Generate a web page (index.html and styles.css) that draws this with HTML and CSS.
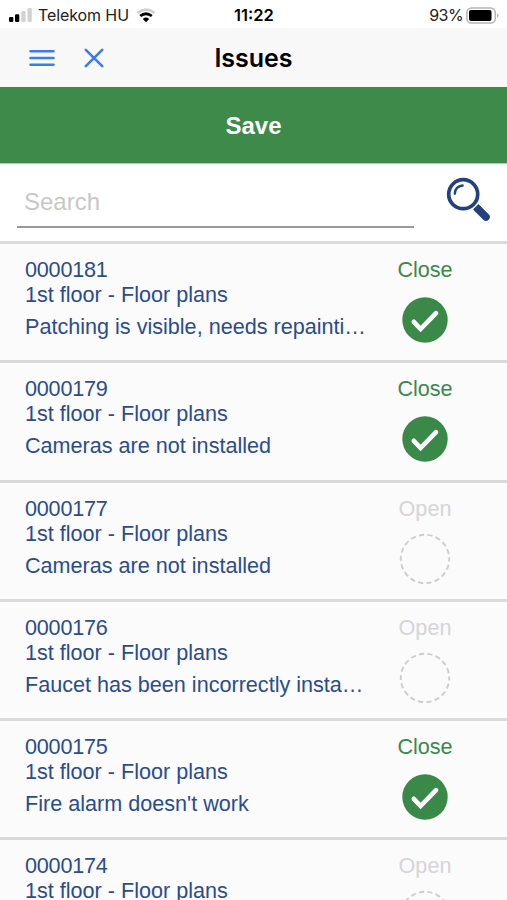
FILE: index.html
```html
<!DOCTYPE html>
<html lang="en">
<head>
    <meta charset="UTF-8">
    <meta name="viewport" content="width=device-width, initial-scale=1.0">
    <title>Issues</title>
    <link rel="stylesheet" href="styles.css">
</head>
<body>
    <svg class="symbols" width="0" height="0">
        <symbol id="icon-done" viewBox="0 0 52 52">
            <circle cx="26" cy="26" r="22.7" fill="#3b8949"/>
            <path d="M14.8 27.8l6.8 7.2L37 19.2" fill="none" stroke="#fff" stroke-width="4.6" stroke-linecap="round"/>
        </symbol>
        <symbol id="icon-open" viewBox="0 0 52 52">
            <circle cx="26" cy="26" r="24.2" fill="none" stroke="#cdcdcd" stroke-width="1.9" stroke-dasharray="5.2 3.246" stroke-dashoffset="2.6"/>
        </symbol>
    </svg>

    <div class="status-bar">
        <div class="status-left">
            <svg class="signal" width="23" height="14" viewBox="0 0 23 14">
                <rect x="0" y="9" width="4.3" height="5" rx="1.2"/>
                <rect x="6" y="6.2" width="4.3" height="7.8" rx="1.2"/>
                <rect x="12.3" y="3" width="4.3" height="11" rx="1.2" fill="#d2d2d2"/>
                <rect x="18.5" y="0" width="4.3" height="14" rx="1.2" fill="#d2d2d2"/>
            </svg>
            <span class="carrier">Telekom HU</span>
            <svg class="wifi" width="20" height="15" viewBox="0 0 20 15">
                <path d="M1.3 5Q10-1.8 18.7 5" fill="none" stroke="#cfcfcf" stroke-width="2.6"/>
                <path d="M4.2 8Q10 3.5 15.8 8" fill="none" stroke="#000" stroke-width="2.8"/>
                <path d="M6.8 10.9Q10 8.2 13.2 10.9L10 14.2z"/>
            </svg>
        </div>
        <div class="time">11:22</div>
        <div class="status-right">
            <span class="percent">93%</span>
            <svg class="battery" width="33" height="17" viewBox="0 0 33 17">
                <rect x="0.9" y="0.9" width="28.4" height="15.2" rx="4.6" fill="none" stroke="#b5b5b5" stroke-width="1.5"/>
                <rect x="3" y="3" width="22.5" height="11" rx="2"/>
                <path d="M31 6.2q1.6.8 1.6 2.3T31 10.8z" fill="#b5b5b5"/>
            </svg>
        </div>
    </div>

    <div class="navbar">
        <div class="nav-buttons">
            <svg width="26" height="20" viewBox="0 0 26 20" fill="none" stroke="#3d7bf0" stroke-width="2.6" stroke-linecap="round">
                <path d="M1.5 3.2h23M1.5 10h23M1.5 16.8h23"/>
            </svg>
            <svg width="20" height="20" viewBox="0 0 20 20" fill="none" stroke="#3d7bf0" stroke-width="2.6" stroke-linecap="round">
                <path d="M1.8 1.8l16.4 16.4M18.2 1.8L1.8 18.2"/>
            </svg>
        </div>
        <h1>Issues</h1>
    </div>

    <button class="save-btn">Save</button>

    <div class="search">
        <input class="search-input" type="text" placeholder="Search">
        <svg class="search-icon" width="46" height="46" viewBox="0 0 46 46" fill="none" stroke="#23417f">
            <circle cx="17.2" cy="17.2" r="14.5" stroke-width="3.7"/>
            <path d="M8.8 16.7q.5-7.5 7.8-8.2" stroke-width="2.4" stroke-linecap="round"/>
            <path d="M29.7 29.7l3 3" stroke-width="7.6"/>
            <path d="M32.7 32.7l7.3 7.3" stroke-width="7.6" stroke-linecap="round"/>
        </svg>
    </div>

    <div class="issues">
        <div class="issue">
            <div class="issue-text">
                <div class="issue-number">0000181</div>
                <div>1st floor - Floor plans</div>
                <div class="issue-title">Patching is visible, needs repainti…</div>
            </div>
            <div class="issue-state closed">
                <span>Close</span>
                <svg width="52" height="52"><use href="#icon-done"/></svg>
            </div>
        </div>
        <div class="issue">
            <div class="issue-text">
                <div class="issue-number">0000179</div>
                <div>1st floor - Floor plans</div>
                <div class="issue-title">Cameras are not installed</div>
            </div>
            <div class="issue-state closed">
                <span>Close</span>
                <svg width="52" height="52"><use href="#icon-done"/></svg>
            </div>
        </div>
        <div class="issue">
            <div class="issue-text">
                <div class="issue-number">0000177</div>
                <div>1st floor - Floor plans</div>
                <div class="issue-title">Cameras are not installed</div>
            </div>
            <div class="issue-state">
                <span>Open</span>
                <svg width="52" height="52"><use href="#icon-open"/></svg>
            </div>
        </div>
        <div class="issue">
            <div class="issue-text">
                <div class="issue-number">0000176</div>
                <div>1st floor - Floor plans</div>
                <div class="issue-title">Faucet has been incorrectly insta…</div>
            </div>
            <div class="issue-state">
                <span>Open</span>
                <svg width="52" height="52"><use href="#icon-open"/></svg>
            </div>
        </div>
        <div class="issue">
            <div class="issue-text">
                <div class="issue-number">0000175</div>
                <div>1st floor - Floor plans</div>
                <div class="issue-title">Fire alarm doesn't work</div>
            </div>
            <div class="issue-state closed">
                <span>Close</span>
                <svg width="52" height="52"><use href="#icon-done"/></svg>
            </div>
        </div>
        <div class="issue">
            <div class="issue-text">
                <div class="issue-number">0000174</div>
                <div>1st floor - Floor plans</div>
            </div>
            <div class="issue-state">
                <span>Open</span>
                <svg width="52" height="52"><use href="#icon-open"/></svg>
            </div>
        </div>
    </div>
</body>
</html>
```

FILE: styles.css
```css
* {
    margin: 0;
    padding: 0;
    box-sizing: border-box;
}

body {
    height: 900px;
    overflow: hidden;
    display: flex;
    flex-direction: column;
    font-family: "Liberation Sans", Arial, sans-serif;
    background: #fff;
}

.symbols {
    display: none;
}

.status-bar {
    flex: none;
    height: 28px;
    padding: 2px 8px 0 9px;
    display: grid;
    grid-template-columns: 1fr auto 1fr;
    align-items: center;
    font-family: Inter, sans-serif;
    font-size: 16px;
    color: #222;
}

.status-left,
.status-right {
    display: flex;
    align-items: center;
}

.status-right {
    justify-content: flex-end;
    gap: 3px;
}

.signal {
    margin-right: 6px;
}

.carrier {
    letter-spacing: -0.1px;
}

.wifi {
    margin-left: 7px;
}

.percent {
    letter-spacing: -0.6px;
}

.time {
    font-size: 16.5px;
    font-weight: 600;
    color: #000;
}

.navbar {
    flex: none;
    height: 59px;
    padding: 0 29px;
    display: grid;
    grid-template-columns: 1fr auto 1fr;
    align-items: center;
    background: #f8f8f8;
}

.nav-buttons {
    display: flex;
    align-items: center;
    gap: 29px;
}

.navbar h1 {
    font-family: Inter, sans-serif;
    font-size: 25px;
    font-weight: 600;
    color: #000;
}

.save-btn {
    flex: none;
    height: 77px;
    padding-top: 1px;
    border: none;
    border-bottom: 1px solid #a5cfac;
    background: #3d8a4b;
    color: #fff;
    font-family: inherit;
    font-size: 24px;
    font-weight: bold;
}

.search {
    flex: none;
    height: 77px;
    padding: 13px 15px 0 17px;
    display: flex;
    justify-content: space-between;
    align-items: flex-start;
}

.search-input {
    width: 397px;
    height: 51px;
    padding: 1px 7px 0;
    border: none;
    border-bottom: 2px solid #999;
    background: none;
    font-family: inherit;
    font-size: 24px;
    outline: none;
}

.search-input::placeholder {
    color: #c7c7c7;
}

.issue {
    height: 119.3px;
    padding: 13px 50px 0 25px;
    display: flex;
    justify-content: space-between;
    border-top: 3px solid #dadada;
    background: #fbfbfb;
    font-size: 21.6px;
    line-height: 25px;
    color: #2b4c8d;
}

.issue-text {
    width: 346px;
}

.issue-number {
    letter-spacing: -0.2px;
}

.issue-title {
    margin-top: 7px;
    overflow: hidden;
    white-space: nowrap;
    text-overflow: ellipsis;
}

.issue-state {
    width: 64px;
    display: flex;
    flex-direction: column;
    align-items: center;
    gap: 12px;
    color: #d5d5d5;
}

.issue-state svg {
    flex: none;
}

.issue-state.closed {
    color: #3b8949;
}
```
